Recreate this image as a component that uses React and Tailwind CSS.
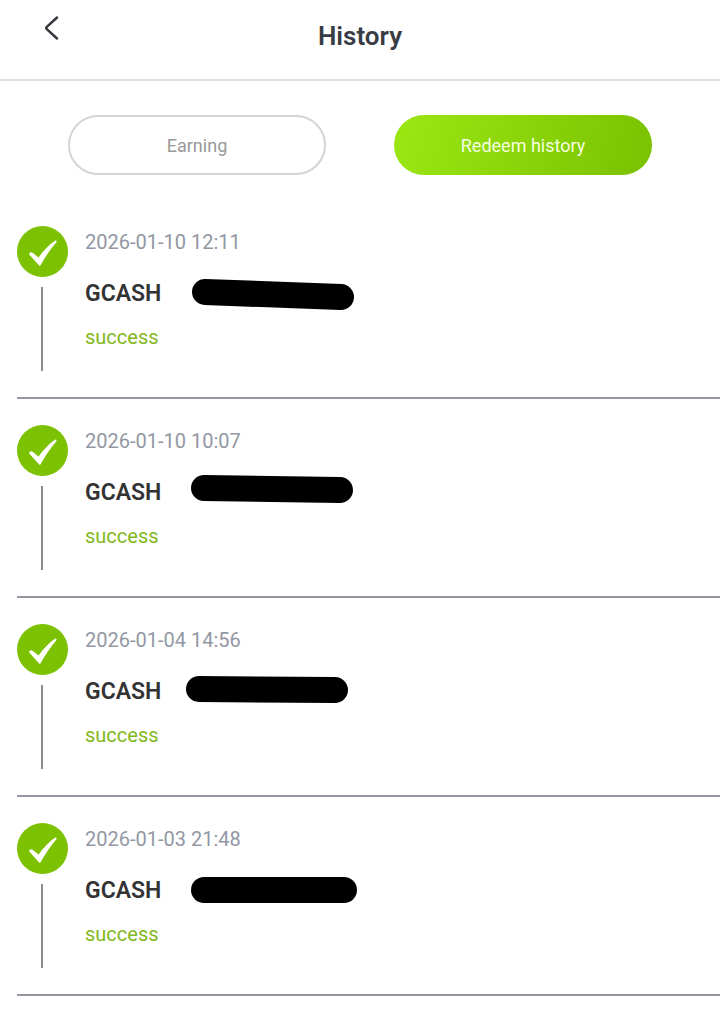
import React from "react";

const records = [
  { id: 1, time: "2026-01-10 12:11", method: "GCASH", status: "success", mark: { x1: 25, y1: 14, x2: 161, y2: 19 } },
  { id: 2, time: "2026-01-10 10:07", method: "GCASH", status: "success", mark: { x1: 24, y1: 11, x2: 160, y2: 13 } },
  { id: 3, time: "2026-01-04 14:56", method: "GCASH", status: "success", mark: { x1: 19, y1: 13, x2: 155, y2: 14 } },
  { id: 4, time: "2026-01-03 21:48", method: "GCASH", status: "success", mark: { x1: 24, y1: 15, x2: 164, y2: 15 } },
];

const CheckBadge = () => (
  <svg className="h-[51px] w-[51px]" viewBox="0 0 51 51" aria-hidden="true">
    <circle cx="25.5" cy="25.5" r="25.5" fill="#7dc103" />
    <path
      d="M12 28.2 Q13 25.6 15.2 26.6 L21.6 31.4 C26.5 25 31.6 19 38.4 14.6 Q40 14.4 39.4 16.2 C33.2 23.4 28 31 23.6 39.2 Q22.9 40.4 21.9 39.2 Z"
      fill="#fff"
    />
  </svg>
);

// Hand-drawn stroke that hides the account number
const HiddenAccount = ({ mark }) => (
  <svg className="h-8 w-[180px] overflow-visible" viewBox="0 0 180 32" role="img" aria-label="Hidden account number">
    <line {...mark} stroke="#000" strokeWidth="26" strokeLinecap="round" />
  </svg>
);

const HistoryItem = ({ record }) => (
  <li className="flex gap-[17px] border-b-2 border-[#96949f] pt-[26px] pb-[26px]">
    <div className="flex flex-col gap-[10px]">
      <CheckBadge />
      <div className="ml-6 w-[2px] flex-1 bg-[#8c8c8c]" />
    </div>
    <div className="pb-5">
      <p className="text-[20px] leading-8 text-[#9297a3]">{record.time}</p>
      <div className="mt-5 flex gap-[19px]">
        <h2 className="text-[23px] leading-8 font-semibold text-[#333]">{record.method}</h2>
        <HiddenAccount mark={record.mark} />
      </div>
      <p className="mt-[13px] text-[20px] leading-7 text-[#83b81c]">{record.status}</p>
    </div>
  </li>
);

const App = () => {
  return (
    <div className="min-h-screen bg-white font-['Roboto',sans-serif]">
      <header className="grid grid-cols-[1fr_auto_1fr] border-b-2 border-[#dedede] pt-4 pb-[23px]">
        <button type="button" aria-label="Back" className="ml-10 h-6 w-6 text-[#34373c]">
          <svg className="h-6 w-6" viewBox="0 0 24 24" fill="none" aria-hidden="true">
            <path
              d="M17 1.5 L6.8 10.8 Q5.6 12 6.8 13.2 L17 22.5"
              stroke="currentColor"
              strokeWidth="2.5"
              strokeLinecap="round"
              strokeLinejoin="round"
            />
          </svg>
        </button>
        <h1 className="text-[26px] leading-10 font-semibold text-[#383d45]">History</h1>
      </header>

      <nav className="grid grid-cols-2 gap-[68px] px-[68px] pt-[34px] pb-[25px]">
        <button type="button" className="h-[60px] rounded-full border-2 border-[#d4d4d4] text-[18px] text-[#999]">
          Earning
        </button>
        <button
          type="button"
          className="h-[60px] rounded-full bg-linear-[105deg,#9be713,#7ac100] text-[18px] text-[#f3ffdf]"
        >
          Redeem history
        </button>
      </nav>

      <ul className="pl-[17px]">
        {records.map((record) => (
          <HistoryItem key={record.id} record={record} />
        ))}
      </ul>
    </div>
  );
};

export default App;
